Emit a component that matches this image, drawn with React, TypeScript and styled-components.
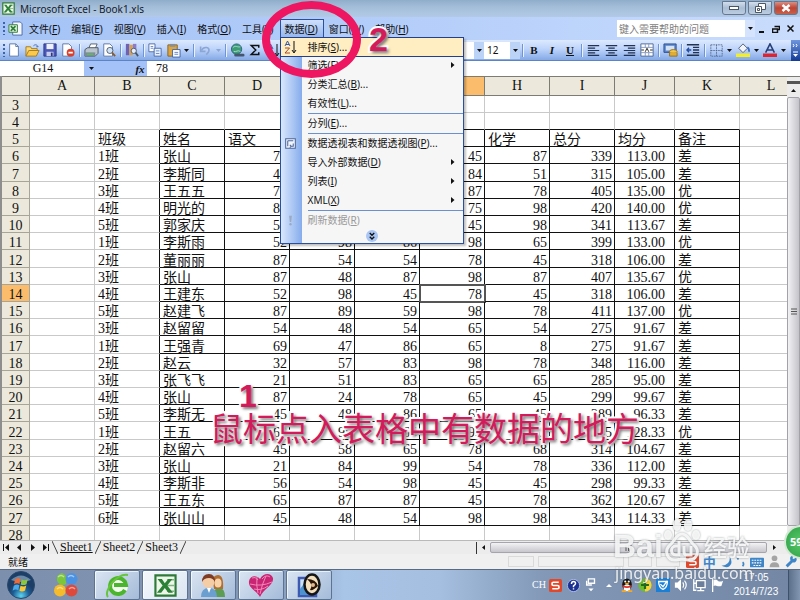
import React from "react";
import styled, { createGlobalStyle, css } from "styled-components";

const UI = '"Noto Sans", "Noto Sans CJK SC", sans-serif';
const CELL = '"Liberation Serif", "Noto Sans CJK SC", serif';

const GlobalStyle = createGlobalStyle`
  * { box-sizing: border-box; }
  body { margin: 0; background: #fff; }
  button, input, select { font: inherit; color: inherit; margin: 0; padding: 0; border: 0; background: none; border-radius: 0; outline: 0; }
  button { display: inline-flex; align-items: center; justify-content: center; flex: none; }
  svg { display: block; flex: none; }
`;

const Screen = styled.div`
  position: relative;
  display: flex;
  flex-direction: column;
  height: 100vh;
  overflow: hidden;
  font: 10px/14px ${UI};
  color: #111;
`;

/* ---------- title bar ---------- */
const TitleBar = styled.header`
  display: flex;
  align-items: center;
  gap: 5px;
  height: 17px;
  flex: none;
  padding-left: 2px;
  background: linear-gradient(#8fadca, #a3bdd8 40%, #b3cae6);
`;
const Title = styled.h1`
  flex: 1;
  margin: 0;
  font: 10px/16px ${UI};
  color: #16202c;
`;
const CaptionButtons = styled.div`
  display: flex;
  gap: 2px;
  align-self: flex-start;
  padding: 1px 2px 0 0;
`;
const CaptionButton = styled.button<{ $close?: boolean }>`
  width: 24px;
  height: 14px;
  border: 1px solid #65788f;
  border-radius: 0 0 3px 3px;
  background: ${(p) => (p.$close ? "linear-gradient(#d98f83, #bf4434 50%, #c8604c)" : "linear-gradient(#d3deeb, #a9bdd3 50%, #bccde0)")};
`;

/* ---------- menu bar ---------- */
const MenuBar = styled.nav`
  display: flex;
  align-items: center;
  height: 23px;
  flex: none;
  padding: 0 3px;
  background: linear-gradient(90deg, #a5c3f6, #b4cefa 50%, #c9dcfd);
`;
const Grip = styled.span`
  width: 2px;
  height: 13px;
  flex: none;
  background: repeating-linear-gradient(#3c62a8 0 2px, transparent 2px 4px);
`;
const MenuLogo = styled.span`
  padding: 0 1px 0 3px;
`;
const MenuSlot = styled.div`
  position: relative;
`;
const MenuButton = styled.button<{ $open?: boolean }>`
  height: 20px;
  padding: 0 5px 0 4px;
  border: 1px solid transparent;
  white-space: nowrap;
  ${(p) =>
    p.$open &&
    css`
      border-color: #2c4f9b;
      border-bottom: 0;
      background: linear-gradient(#cfe0fb, #8fb2ec);
    `}
`;
const HelpBox = styled.div`
  display: flex;
  margin-left: auto;
  height: 17px;
  background: #fff;
`;
const HelpInput = styled.input`
  width: 128px;
  padding-left: 2px;
  &::placeholder { color: #7d7d7d; opacity: 1; }
`;
const DropButton = styled.button<{ $pale?: boolean }>`
  width: ${(p) => (p.$pale ? 10 : 14)}px;
  height: 100%;
  background: ${(p) => (p.$pale ? "#d5e4fc" : "transparent")};
`;
const DocButton = styled.button`
  width: 14px;
  height: 16px;
`;

/* ---------- drop-down menu ---------- */
const Dropdown = styled.div`
  position: absolute;
  z-index: 5;
  top: 18px;
  left: 0;
  width: 184px;
  border: 1px solid #2c4f9b;
  background: linear-gradient(90deg, #d9e8fd 0, #86acec 21px, #f6f6f6 21px);
  box-shadow: 2px 2px 2px rgba(0, 0, 0, 0.25);
`;
const DropItem = styled.button<{ $active?: boolean; $off?: boolean }>`
  display: flex;
  width: 100%;
  height: ${(p) => (p.$active ? 18 : 19)}px;
  justify-content: flex-start;
  color: ${(p) => (p.$off ? "#9a9a9a" : "#111")};
  outline: ${(p) => (p.$active ? "1px solid #22408e" : "0")};
  background: ${(p) => (p.$active ? "#ffeec2" : "transparent")};
  white-space: nowrap;
`;
const DropIcon = styled.span`
  display: flex;
  justify-content: center;
  width: 20px;
  margin-right: 7px;
`;
const DropLabel = styled.span`
  flex: 1;
  text-align: left;
`;
const SubArrow = styled.span`
  width: 12px;
`;
const DropRule = styled.div`
  height: 1px;
  margin-left: 27px;
  background: #6c8fd0;
`;
const DropMore = styled.button`
  display: flex;
  width: 100%;
  height: 13px;
`;

/* ---------- tool bar ---------- */
const ToolBar = styled.div`
  display: flex;
  align-items: center;
  height: 21px;
  flex: none;
  padding-left: 3px;
  background: linear-gradient(#dce9fe, #bdd4fa 45%, #84a9e6);
  border-bottom: 1px solid #5c83c4;
`;
const ToolButton = styled.button`
  width: 18px;
  height: 20px;
`;
const ToolArrow = styled.button`
  width: 9px;
  height: 18px;
`;
const ToolRule = styled.span`
  width: 1px;
  height: 13px;
  margin: 0 2px;
  flex: none;
  background: #6f94d6;
  box-shadow: 1px 0 #eaf2ff;
`;
const Spacer = styled.span`
  flex: 1;
`;
const Combo = styled.div<{ $w: number }>`
  display: flex;
  width: ${(p) => p.$w}px;
  height: 17px;
  flex: none;
  align-items: center;
  background: #fff;
`;
const ComboSelect = styled.select`
  flex: 1;
  min-width: 0;
  height: 16px;
  padding-left: 3px;
  appearance: none;
`;
const ComboArrow = styled.span`
  display: flex;
  justify-content: center;
  align-items: center;
  width: 10px;
  height: 100%;
  background: #bcd3f8;
`;
const ToolEnd = styled.button`
  width: 9px;
  height: 21px;
  margin-left: 3px;
  background: linear-gradient(#6f96de, #123a94);
`;
const BoldGlyph = styled.span<{ $i?: boolean; $u?: boolean }>`
  font: ${(p) => (p.$i ? "italic" : "normal")} bold 11px/14px ${CELL};
  text-decoration: ${(p) => (p.$u ? "underline" : "none")};
`;

/* ---------- formula bar ---------- */
const FormulaBar = styled.div`
  display: flex;
  height: 15px;
  flex: none;
  margin-left: 2px;
  background: #a4c2f7;
  font: 12px/15px ${CELL};
`;
const NameInput = styled.input`
  width: 82px;
  background: #fff;
  text-align: center;
`;
const FxButton = styled.button`
  width: 14px;
  margin: 0 0 0 35px;
  font: italic bold 11px/14px ${CELL};
`;
const FormulaInput = styled.input`
  flex: 1;
  padding-left: 9px;
  background: #fff;
`;

/* ---------- sheet ---------- */
const SheetArea = styled.main`
  display: flex;
  flex: 1;
  min-height: 0;
  border-left: 2px solid #8e8e8e;
`;
const SheetView = styled.div`
  flex: 1;
  min-width: 0;
  overflow: hidden;
`;
const Sheet = styled.table`
  width: calc(100% + 16px);
  table-layout: fixed;
  border-spacing: 0;
  font: 14px/18px ${CELL};
`;
const Col = styled.col<{ $w?: number }>`
  width: ${(p) => (p.$w ? `${p.$w}px` : "auto")};
`;
const SheetRow = styled.tr`
  height: 17px;
  &:nth-child(5n) { height: 18px; }
`;
const ColHead = styled.th<{ $on?: boolean }>`
  height: 20px;
  padding: 0;
  border: solid #7c7b74;
  border-width: 1px 1px 1px 0;
  background: ${(p) => (p.$on ? "#fbbd6c" : "#ece9dc")};
  font-weight: 400;
`;
const RowHead = styled.th<{ $on?: boolean }>`
  padding: 4px 0 0;
  border: solid #a7a598;
  border-width: 0 1px 1px 0;
  background: ${(p) => (p.$on ? "#fbbd6c" : "#ece9dc")};
  font-weight: 400;
  line-height: 12px;
`;
const Cell = styled.td<{ $r?: boolean; $b?: boolean; $num?: boolean; $wide?: boolean; $sel?: boolean }>`
  position: relative;
  height: 16px;
  padding: 4px ${(p) => (p.$wide ? 9 : 2)}px 0 3px;
  border: solid #c9c9c9;
  border-width: 0 1px 1px 0;
  ${(p) => p.$r && "border-right-color: #111;"}
  ${(p) => p.$b && "border-bottom-color: #111;"}
  ${(p) => p.$sel && "outline: 2px solid #555; outline-offset: -1px;"}
  line-height: 12px;
  text-align: ${(p) => (p.$num ? "right" : "left")};
  white-space: nowrap;
`;
const VScroll = styled.div`
  display: flex;
  flex-direction: column;
  align-items: center;
  position: relative;
  width: 13px;
  flex: none;
  border-top: 1px solid #7c7b74;
  background: #ececec;
`;
const SplitHandle = styled.span`
  width: 13px;
  height: 3px;
  margin-top: 4px;
  background: #555;
`;
const VArrow = styled.button`
  width: 13px;
  height: 13px;
`;
const VThumb = styled.div`
  display: flex;
  align-items: center;
  justify-content: center;
  width: 13px;
  flex: 1;
  margin-bottom: 14px;
  border: 1px solid #a2a2a8;
  border-radius: 2px;
  background: linear-gradient(90deg, #f2f2f4, #c3c3ca);
`;

/* ---------- sheet tabs and status ---------- */
const TabStrip = styled.div`
  display: flex;
  align-items: center;
  height: 14px;
  flex: none;
  border-top: 1px solid #b9b9b9;
  background: #ececec;
  font: 12px/13px ${CELL};
`;
const NavButton = styled.button`
  width: 13px;
  height: 13px;
`;
const Tabs = styled.div`
  display: flex;
  flex: 1;
  align-items: center;
`;
const Tab = styled.button<{ $on?: boolean }>`
  padding: 0 2px;
  height: 13px;
  text-decoration: ${(p) => (p.$on ? "underline" : "none")};
`;
const HScroll = styled.div`
  display: flex;
  align-items: center;
  width: 41%;
  height: 13px;
  padding-right: 20px;
`;
const HSplit = styled.span`
  width: 5px;
  height: 12px;
  border-right: 1px solid #333;
`;
const HThumb = styled.div`
  display: flex;
  align-items: center;
  justify-content: center;
  flex: 1;
  height: 11px;
  border: 1px solid #a5a5ab;
  border-radius: 2px;
  background: linear-gradient(#f3f3f5, #c6c6cd);
`;
const StatusBar = styled.div`
  display: flex;
  align-items: center;
  gap: 4px;
  height: 15px;
  flex: none;
  padding-left: 8px;
  background: #f0f0f0;
`;
const Pane = styled.span<{ $w: number }>`
  width: ${(p) => p.$w}px;
  height: 11px;
  border: 1px solid #dadada;
`;
const ImeBar = styled.div`
  display: flex;
  align-items: center;
  justify-content: space-around;
  width: 116px;
  height: 15px;
  color: #3e86c8;
`;
const ImeMode = styled.button`
  font: bold 13px/14px ${UI};
`;

/* ---------- task bar ---------- */
const TaskBar = styled.footer`
  display: flex;
  align-items: stretch;
  height: 31px;
  flex: none;
  border-top: 1px solid #596b83;
  background: linear-gradient(90deg, #7c8fac 0, #8499b7 34%, #a8c4e6 43%, #a5bfe0 55%, #8298b6 68%, #7387a5);
`;
const StartButton = styled.button`
  width: 42px;
`;
const TaskButton = styled.button<{ $plain?: boolean; $on?: boolean }>`
  width: ${(p) => (p.$plain ? 47 : 46)}px;
  margin-right: ${(p) => (p.$plain ? 5 : 2)}px;
  ${(p) =>
    !p.$plain &&
    css`
      border: 1px solid #5d7392;
      border-radius: 2px;
      box-shadow: inset 1px 1px rgba(255, 255, 255, 0.7);
      background: ${p.$on ? "linear-gradient(135deg, #f5f8fc, #dbe6f2)" : "linear-gradient(135deg, #dbe5f2, #a4bbd9)"};
    `}
`;
const Tray = styled.div`
  display: flex;
  align-items: center;
  margin-left: auto;
  color: #fff;
`;
const TrayLang = styled.span`
  width: 14px;
  font: 10px/12px ${CELL};
`;
const TrayButton = styled.button`
  width: 18px;
  height: 20px;
`;
const Clock = styled.time`
  width: 62px;
  padding-right: 2px;
  font: 10px/14px "Liberation Sans", sans-serif;
  text-align: center;
`;
const ShowDesktop = styled.button`
  width: 12px;
  height: 30px;
  border-left: 1px solid #3f506a;
  background: linear-gradient(90deg, #5c6f8b, #8296b2);
`;

/* ---------- annotations floating over the window ---------- */
const Ring = styled.div`
  position: absolute;
  z-index: 8;
  top: 1px;
  left: 262px;
  width: 99px;
  height: 77px;
  border: 8px solid #ee1660;
  border-radius: 50%;
  pointer-events: none;
`;
const Mark = styled.div<{ $x: number; $y: number; $size: number; $bold?: boolean }>`
  position: absolute;
  z-index: 8;
  left: ${(p) => p.$x}px;
  top: ${(p) => p.$y}px;
  font: ${(p) => (p.$bold ? 700 : 400)} ${(p) => p.$size}px/40px ${(p) => (p.$bold ? '"Liberation Sans", sans-serif' : '"Noto Sans CJK SC", sans-serif')};
  color: #d31a5b;
  white-space: nowrap;
  -webkit-text-stroke: 4px #fff;
  paint-order: stroke fill;
  text-shadow: 2px 2px 3px rgba(0, 0, 0, 0.55);
  pointer-events: none;
`;
const Ball = styled.div`
  position: absolute;
  z-index: 8;
  right: -18px;
  top: 525px;
  width: 34px;
  height: 34px;
  padding-left: 4px;
  border: 2px solid #d5e8d5;
  border-radius: 50%;
  background: radial-gradient(#5bc96b, #2c9f45);
  color: #fff;
  font: bold 11px/30px ${UI};
`;
const Watermark = styled.div`
  position: absolute;
  z-index: 7;
  left: 613px;
  top: 515px;
  color: rgba(255, 255, 255, 0.85);
  filter: drop-shadow(0 0 1px rgba(110, 115, 120, 0.75));
  pointer-events: none;
`;
const MarkLine = styled.div`
  display: flex;
  align-items: flex-end;
  height: 48px;
  font: bold 32px/34px "Liberation Sans", sans-serif;
`;
const MarkCjk = styled.span`
  margin-left: 3px;
  font: 500 23px/34px "Noto Sans CJK SC", sans-serif;
`;
const MarkUrl = styled.div`
  padding-left: 2px;
  font: 16px/20px ${UI};
`;

/* ---------- icons ---------- */
const Down = ({ c = "#111" }: { c?: string }) => (
  <svg width="5" height="3"><path d="M0 0h5L2.500 3z" fill={c} /></svg>
);
const Right = () => (
  <svg width="4" height="6"><path d="M0 0l3.500 3L0 6z" fill="#111" /></svg>
);
const Svg = ({ s = 14, children }: { s?: number; children: React.ReactNode }) => (
  <svg width={s} height={s} viewBox="0 0 16 16" fill="none">{children}</svg>
);
const ExcelIcon = ({ s = 13 }: { s?: number }) => (
  <Svg s={s}>
    <path d="M1 1h14v14H1z" fill="#eef6ea" stroke="#2e7a38" strokeWidth="1.500" />
    <path d="M9 4h5M9 8h5M9 12h5" stroke="#7fb583" />
    <path d="M2.500 3.500h3l2 3 2.500-3h2.800L9.200 8l4 5H10L7.500 9.700 5 13H2l4-5z" fill="#2b8136" />
  </Svg>
);
const DocIcon = () => (
  <Svg s={15}>
    <path d="M5 1h8l2 2v12H5z" fill="#f5f8fd" stroke="#4b6aa5" />
    <path d="M1 4h9v8H1z" fill="#e6f3e2" stroke="#2e7a38" />
    <path d="M3 5.500l5 5M8 5.500l-5 5" stroke="#2b8136" strokeWidth="1.800" />
  </Svg>
);
const NewIcon = () => <Svg><path d="M3 1h7l3 3v11H3z" fill="#fff" stroke="#5671a3" /><path d="M10 1v3h3" stroke="#5671a3" /></Svg>;
const OpenIcon = () => (
  <Svg s={15}><path d="M1 14V4h5l1 2h6v2" fill="#f7d777" stroke="#a37a1e" /><path d="M1 14l3-6h11l-3 6z" fill="#fbc94b" stroke="#a37a1e" /><path d="M9 3c2-2 4-1 5 1l-2 0" stroke="#4668a8" /></Svg>
);
const SaveIcon = () => <Svg><path d="M1 1h14v14H1z" fill="#4c58b8" stroke="#2c3584" /><path d="M4 1h8v6H4z" fill="#eef1fb" /><path d="M4 10h8v5H4z" fill="#c7cdea" /><path d="M9 11h2v4H9z" fill="#2c3584" /></Svg>;
const PermIcon = () => <Svg><path d="M2 1h7l3 3v11H2z" fill="#fff" stroke="#5671a3" /><circle cx="11" cy="11" r="4.500" fill="#d8402d" /><path d="M8.500 11h5" stroke="#fff" strokeWidth="2" /></Svg>;
const PrintIcon = () => <Svg s={15}><path d="M5 6l2-5h7l-2 5z" fill="#fff" stroke="#58606c" /><path d="M1 7l3-2h11v6l-3 3H1z" fill="#b9c4cf" stroke="#4d5763" /><path d="M1 10h11v4H1z" fill="#7d8b99" /><path d="M3 12h7" stroke="#55c04f" strokeWidth="1.500" /></Svg>;
const PreviewIcon = () => <Svg><path d="M2 1h7l3 3v11H2z" fill="#fff" stroke="#5671a3" /><circle cx="9" cy="8.500" r="3.500" fill="#cfe2f6" stroke="#46566b" /><path d="M11.500 11l3.500 4" stroke="#8a5a2b" strokeWidth="2" /></Svg>;
const ResearchIcon = () => <Svg><path d="M1 1h4v13H1z" fill="#6e62b4" /><path d="M5 2h4v12H5z" fill="#d8a052" /><path d="M9 1h4v8H9z" fill="#8b7bc9" /><circle cx="10" cy="9" r="3" fill="#e6eefa" stroke="#46566b" /><path d="M12 11l3 4" stroke="#46566b" strokeWidth="2" /></Svg>;
const CopyIcon = () => <Svg><path d="M1 1h7v9H1z" fill="#fff" stroke="#4263a5" /><path d="M7 6h8v9H7z" fill="#e8f0fd" stroke="#4263a5" /><path d="M3 4h3M3 6h3M9 9h4M9 12h4" stroke="#5f82c4" /></Svg>;
const PasteIcon = () => <Svg s={15}><path d="M2 2h10v12H2z" fill="#d9a441" stroke="#8c6420" /><path d="M4 1h6v3H4z" fill="#888d96" /><path d="M7 7h8v8H7z" fill="#fff" stroke="#4263a5" /><path d="M9 10h4M9 12h4" stroke="#5f82c4" /></Svg>;
const UndoIcon = () => <Svg s={13}><path d="M2 3v6h6" stroke="#8ba5d4" strokeWidth="2" /><path d="M3 8c3-6 11-4 9 1-1 2-2 3-3 4" stroke="#8ba5d4" strokeWidth="2" /></Svg>;
const LinkIcon = () => <Svg s={15}><circle cx="7" cy="6.500" r="5.500" fill="#3f9d76" stroke="#2d5f86" /><path d="M3 5c3-3 5 0 8-1M4 9c3 1 4-2 7 0" stroke="#a8dccb" /><path d="M6 13h4M9 13h5" stroke="#45566e" strokeWidth="3" strokeLinecap="round" /></Svg>;
const SumIcon = () => <Svg s={12}><path d="M13 5V2H3l6 6-6 6h10v-3" stroke="#111" strokeWidth="2" /></Svg>;
const SortIcon = () => (
  <svg width="13" height="14" viewBox="0 0 13 14" fill="none">
    <path d="M1 6l2.500-5L6 6M2 4.500h3" stroke="#3457a8" /><path d="M1 8h4.500L1 13h5" stroke="#a34a2c" /><path d="M10 1v11M8 10l2 3 2-3" stroke="#111" />
  </svg>
);
const Align = ({ a }: { a: number }) => {
  const from = [1, 4, 6][a];
  const to = [10, 12, 15][a];
  return <Svg s={13}><path d={`M1 2h14M${from} 5H${to}M1 8h14M${from} 11H${to}M1 14h14`} stroke="#223252" strokeWidth="1.500" /></Svg>;
};
const MergeIcon = () => <Svg><path d="M1 1h14v14H1z" fill="#fff" stroke="#45608f" /><path d="M1 5h14M1 11h14M6 1v4M10 1v4M6 11v4M10 11v4" stroke="#7e94bb" /><path d="M6 10l2-4 2 4M1.500 8h3M11.500 8h3" stroke="#111" /></Svg>;
const MoneyIcon = () => <Svg s={15}><path d="M1 1h13v9H1z" fill="#5d86cd" stroke="#2f4f8f" /><path d="M3 3h9v5H3z" fill="#d4e2f8" /><ellipse cx="11" cy="9" rx="4" ry="2" fill="#f0c850" stroke="#96701c" /><path d="M7 10v4h8v-4" fill="#e0ae36" stroke="#96701c" /></Svg>;
const IndentIcon = () => <Svg><path d="M1 2h14M8 5h7M8 8h7M8 11h7M1 14h14" stroke="#223252" strokeWidth="1.500" /><path d="M6 8H1M3.500 5.500L1 8l2.500 2.500" stroke="#234b9f" strokeWidth="1.500" /></Svg>;
const BorderIcon = () => <Svg s={13}><path d="M1 1h14v14H1zM8 1v14M1 8h14" stroke="#4d6088" strokeDasharray="2 1" /></Svg>;
const FillIcon = () => <Svg><path d="M3 6l5-5 5 5-5 5z" fill="#f2f5fa" stroke="#44546e" /><path d="M13 5c2 1 2 3 2 5" stroke="#3e6cc0" strokeWidth="2" /><path d="M0 12h16v4H0z" fill="#f3ee2b" /></Svg>;
const FontIcon = () => <Svg><path d="M3 11L8 1l5 10M5 8h6" stroke="#283e78" strokeWidth="1.800" /><path d="M0 12h16v4H0z" fill="#dd2430" /></Svg>;
const PivotIcon = () => <Svg s={11}><path d="M1 1h14v14H1z" fill="#f1f5fc" stroke="#4b659a" strokeWidth="1.500" /><path d="M4 4h8M4 4v8M8 12h4V8M7 10l2 2-2 2" stroke="#4b659a" strokeWidth="1.500" /></Svg>;
const BangIcon = () => <Svg s={11}><path d="M6 1h4l-1 9H7z" fill="#9aa9c4" /><circle cx="8" cy="13.500" r="1.700" fill="#9aa9c4" /></Svg>;
const MoreIcon = () => <Svg s={12}><circle cx="8" cy="8" r="8" fill="#a9c6f4" /><path d="M5 4l3 3 3-3M5 9l3 3 3-3" stroke="#111" strokeWidth="1.800" /></Svg>;
const Nav = ({ d }: { d: string }) => <svg width="8" height="7" viewBox="0 0 8 7"><path d={d} fill="#111" /></svg>;
const SogouIcon = ({ s = 13 }: { s?: number }) => <Svg s={s}><rect width="16" height="16" rx="2" fill="#e0482c" /><path d="M12 4H5.500C3 4 3 8 5.500 8h5c2.500 0 2.500 4 0 4H4" stroke="#fff" strokeWidth="2" /></Svg>;

const StartIcon = () => (
  <svg width="28" height="28" viewBox="0 0 28 28">
    <defs><radialGradient id="orb" cx=".5" cy=".9"><stop offset="0" stopColor="#5fd4f0" /><stop offset=".6" stopColor="#1c5e97" /><stop offset="1" stopColor="#1d3e66" /></radialGradient></defs>
    <circle cx="14" cy="14" r="13.500" fill="url(#orb)" stroke="#28496d" />
    <path d="M4 9Q14 0 24 9Q14 13 4 9z" fill="#b8d4e8" opacity=".5" />
    <path d="M8 8.500q3-2 5.500-.5l-1 5q-3-1.500-5.500.5z" fill="#ee6a38" />
    <path d="M14.700 8.500q3 1.500 6-.3l-1.200 5q-3 1.600-5.800.3z" fill="#8cc63e" />
    <path d="M6.800 14.700q3-2 5.500-.5l-1 5q-3-1.500-5.700.6z" fill="#4aa9e8" />
    <path d="M13.500 14.800q3 1.500 5.800-.2l-1.200 5q-3 1.600-5.700.2z" fill="#fcc735" />
  </svg>
);
const BallsIcon = () => (
  <svg width="26" height="26" viewBox="0 0 26 26">
    <path d="M9 1a6 6 0 1 0 4 11V7A6 6 0 0 0 9 1z" fill="#7cc63c" /><circle cx="18.500" cy="7" r="6" fill="#4b93e2" />
    <circle cx="7" cy="18.500" r="6" fill="#f5bb2a" /><circle cx="18.500" cy="18.500" r="6" fill="#dd4a3c" />
    <path d="M5 5q3-3 6 0M15 5q3-3 6 0M4 17q3-3 6 0M16 17q3-3 6 0" stroke="#fff" strokeWidth="1.500" opacity=".5" fill="none" />
  </svg>
);
const BrowserIcon = () => (
  <svg width="25" height="25" viewBox="0 0 25 25" fill="none">
    <circle cx="13" cy="13" r="10" fill="#f4fbef" /><path d="M20 17a8 8 0 1 1 1-5H9" stroke="#4cb52e" strokeWidth="4" /><path d="M3 24C-2 18 12 0 23 2" stroke="#67c43d" strokeWidth="2" />
  </svg>
);
const PeopleIcon = () => (
  <svg width="26" height="25" viewBox="0 0 26 25">
    <path d="M13 24q0-9 6-9t6 9z" fill="#5c9c54" /><path d="M13 8q0-6 5-6 6 0 5 14h-9z" fill="#b06e30" /><ellipse cx="18" cy="10" rx="3.500" ry="4.500" fill="#f7d3ac" />
    <path d="M1 24q0-9 8-9t8 9z" fill="#6b9fd0" /><circle cx="8.500" cy="9" r="6" fill="#f4cda6" /><path d="M2 9q0-8 7-8 6 0 6 8-2-4-6-4-5 0-7 4z" fill="#7e3b24" /><path d="M7 15l2 5 2-5z" fill="#fff" />
  </svg>
);
const HeartIcon = () => (
  <svg width="26" height="25" viewBox="0 0 26 25"><path d="M12 24C8 17 0 15 1 8c1-6 8-6 11-2 3-6 11-7 13-1 1 7-9 10-13 19z" fill="#ca2574" /><path d="M4 5q3-2 6 2M14 6q4-5 8-2M2 11q11 3 22-2M6 16q7 2 14-3M9 4q-1 8 1 16M18 3q-4 8-6 18" stroke="#ef8ab8" fill="none" /></svg>
);
const LensIcon = () => (
  <svg width="26" height="25" viewBox="0 0 26 25" fill="none">
    <path d="M3 5h17v18H3z" fill="#c9e2f5" stroke="#3d59b4" strokeWidth="2.500" /><path d="M4 16l6-8 6 14H4z" fill="#4d93cd" />
    <ellipse cx="16" cy="11.500" rx="7.500" ry="10" fill="#f2dfbd" stroke="#151515" strokeWidth="2.500" /><path d="M11 6q9 0 11 7-5 5-8 4 4-5-3-11z" fill="#2c1408" /><circle cx="17" cy="12" r="2" fill="#e2b98c" />
  </svg>
);
const PawIcon = () => (
  <svg width="38" height="46" viewBox="0 0 38 46">
    <g fill="currentColor"><ellipse cx="5" cy="18" rx="4" ry="5" /><ellipse cx="14" cy="8" rx="4" ry="6" /><ellipse cx="25" cy="8" rx="4" ry="6" /><ellipse cx="33" cy="18" rx="4" ry="5" /></g>
    <path d="M19 17c-6 0-7 7-12 11-7 6-2 16 6 15 4-1 8-1 12 0 8 1 13-9 6-15-5-4-6-11-12-11z" fill="none" stroke="currentColor" strokeWidth="3" />
    <path d="M16 24v14h-3c-6 0-6-9 0-9h3M21 29v6q0 3 3 3h4v-9" fill="none" stroke="currentColor" strokeWidth="3" />
  </svg>
);

/* ---------- data ---------- */
const menus: [string, string][] = [["文件", "F"], ["编辑", "E"], ["视图", "V"], ["插入", "I"], ["格式", "O"], ["工具", "T"], ["数据", "D"], ["窗口", "W"], ["帮助", "H"]];

type Drop = { t: string; k: string; dots?: boolean; sub?: boolean; icon?: React.ReactNode; active?: boolean; off?: boolean; rule?: boolean };
const dropItems: Drop[] = [
  { t: "排序", k: "S", dots: true, icon: <SortIcon />, active: true },
  { t: "筛选", k: "F", sub: true },
  { t: "分类汇总", k: "B", dots: true },
  { t: "有效性", k: "L", dots: true, rule: true },
  { t: "分列", k: "E", dots: true, rule: true },
  { t: "数据透视表和数据透视图", k: "P", dots: true, icon: <PivotIcon /> },
  { t: "导入外部数据", k: "D", sub: true },
  { t: "列表", k: "I", sub: true },
  { t: "XML", k: "X", sub: true, rule: true },
  { t: "刷新数据", k: "R", off: true, icon: <BangIcon /> },
];

const letters = "ABCDEFGHIJKL".split("");
const widths = [28, 65, 65, 65, 65, 65, 65, 65, 65, 65, 60, 65];

const rows: string[][] = [
  [], [],
  ["班级", "姓名", "语文", "数学", "英语", "物理", "化学", "总分", "均分", "备注"],
  ["1班", "张山", "78", "54", "75", "45", "87", "339", "113.00", "差"],
  ["2班", "李斯同", "45", "57", "78", "84", "51", "315", "105.00", "差"],
  ["3班", "王五五", "78", "75", "87", "87", "78", "405", "135.00", "优"],
  ["4班", "明光的", "87", "75", "85", "75", "98", "420", "140.00", "优"],
  ["5班", "郭家庆", "54", "78", "66", "45", "98", "341", "113.67", "差"],
  ["1班", "李斯雨", "52", "98", "86", "98", "65", "399", "133.00", "优"],
  ["2班", "董丽丽", "87", "54", "54", "78", "45", "318", "106.00", "差"],
  ["3班", "张山", "87", "48", "87", "98", "87", "407", "135.67", "优"],
  ["4班", "王建东", "52", "98", "45", "78", "45", "318", "106.00", "差"],
  ["5班", "赵建飞", "87", "89", "59", "98", "78", "411", "137.00", "优"],
  ["3班", "赵留留", "54", "48", "54", "65", "54", "275", "91.67", "差"],
  ["1班", "王强青", "69", "47", "86", "65", "8", "275", "91.67", "差"],
  ["2班", "赵云", "32", "57", "83", "98", "78", "348", "116.00", "差"],
  ["3班", "张飞飞", "21", "51", "83", "65", "65", "285", "95.00", "差"],
  ["4班", "张山", "87", "24", "78", "65", "45", "299", "99.67", "差"],
  ["5班", "李斯无", "45", "48", "86", "65", "45", "289", "96.33", "差"],
  ["1班", "王五", "62", "98", "65", "98", "62", "385", "128.33", "优"],
  ["2班", "赵留六", "45", "58", "65", "78", "68", "314", "104.67", "差"],
  ["3班", "张山", "21", "84", "99", "54", "78", "336", "112.00", "差"],
  ["4班", "李斯非", "56", "54", "98", "45", "45", "298", "99.33", "差"],
  ["5班", "王五东", "65", "87", "87", "45", "78", "362", "120.67", "差"],
  ["6班", "张山山", "45", "48", "54", "98", "98", "343", "114.33", "差"],
  [],
];

const Tool = ({ label, children }: { label: string; children: React.ReactNode }) => (
  <ToolButton aria-label={label}>{children}</ToolButton>
);
const More = ({ label, c }: { label: string; c?: string }) => (
  <ToolArrow aria-label={label}><Down c={c} /></ToolArrow>
);

const DataMenu = () => (
  <Dropdown role="menu">
    {dropItems.map((i) => (
      <React.Fragment key={i.k}>
        <DropItem role="menuitem" $active={i.active} $off={i.off}>
          <DropIcon>{i.icon}</DropIcon>
          <DropLabel>{i.t}(<u>{i.k}</u>){i.dots ? "..." : ""}</DropLabel>
          <SubArrow>{i.sub && <Right />}</SubArrow>
        </DropItem>
        {i.rule && <DropRule />}
      </React.Fragment>
    ))}
    <DropMore aria-label="展开"><MoreIcon /></DropMore>
  </Dropdown>
);

const Grid = () => (
  <Sheet>
    <colgroup>
      {widths.map((w, i) => <Col key={i} $w={w} />)}
      <Col />
    </colgroup>
    <thead>
      <tr>
        <ColHead />
        {letters.map((l) => <ColHead key={l} $on={l === "G"}>{l}</ColHead>)}
      </tr>
    </thead>
    <tbody>
      {rows.map((r, ri) => {
        const n = ri + 3;
        const inData = n >= 5 && n <= 27;
        return (
          <SheetRow key={n}>
            <RowHead $on={n === 14}>{n}</RowHead>
            {letters.map((l, ci) => (
              <Cell
                key={l}
                $r={inData && ci >= 1 && ci <= 10}
                $b={n >= 4 && n <= 27 && ci >= 2 && ci <= 10}
                $num={n > 5 && ci >= 3 && ci <= 9}
                $wide={ci === 9 && n > 5}
                $sel={n === 14 && l === "G"}
              >
                {ci > 0 ? r[ci - 1] : null}
              </Cell>
            ))}
          </SheetRow>
        );
      })}
    </tbody>
  </Sheet>
);

export default function App() {
  return (
    <Screen>
      <GlobalStyle />
      <TitleBar>
        <ExcelIcon />
        <Title>Microsoft Excel - Book1.xls</Title>
        <CaptionButtons>
          <CaptionButton aria-label="最小化"><svg width="10" height="5"><rect x=".5" y=".5" width="9" height="3" fill="#fff" stroke="#4b5665" /></svg></CaptionButton>
          <CaptionButton aria-label="还原"><svg width="11" height="10" fill="#fff" stroke="#4b5665"><path d="M3.500.5h7v6h-7z" /><path d="M.5 3.500h6v6h-6z" /><path d="M2.500 5.500h2v2h-2z" /></svg></CaptionButton>
          <CaptionButton $close aria-label="关闭"><svg width="10" height="8"><path d="M1.500 1l7 6M8.500 1l-7 6" stroke="#fff" strokeWidth="2.500" /></svg></CaptionButton>
        </CaptionButtons>
      </TitleBar>

      <MenuBar>
        <Grip />
        <MenuLogo><DocIcon /></MenuLogo>
        {menus.map(([t, k]) => (
          <MenuSlot key={k}>
            <MenuButton $open={k === "D"}>{t}(<u>{k}</u>)</MenuButton>
            {k === "D" && <DataMenu />}
          </MenuSlot>
        ))}
        <HelpBox>
          <HelpInput aria-label="帮助" placeholder="键入需要帮助的问题" />
          <DropButton $pale aria-label="展开帮助"><Down /></DropButton>
        </HelpBox>
        <DocButton aria-label="最小化工作簿"><svg width="6" height="8"><path d="M0 6h5v2H0z" fill="#111" /></svg></DocButton>
        <DocButton aria-label="还原工作簿"><svg width="8" height="8" fill="none" stroke="#111"><path d="M2.500 1.500h5v3h-2M.5 4h5v3.500h-5z" strokeWidth="1.500" /></svg></DocButton>
        <DocButton aria-label="关闭工作簿"><svg width="7" height="7"><path d="M.5.5l6 6M6.500.5l-6 6" stroke="#111" strokeWidth="1.500" /></svg></DocButton>
      </MenuBar>

      <ToolBar>
        <Grip />
        <Tool label="新建"><NewIcon /></Tool>
        <Tool label="打开"><OpenIcon /></Tool>
        <Tool label="保存"><SaveIcon /></Tool>
        <Tool label="权限"><PermIcon /></Tool>
        <ToolRule />
        <Tool label="打印"><PrintIcon /></Tool>
        <Tool label="打印预览"><PreviewIcon /></Tool>
        <ToolRule />
        <Tool label="信息检索"><ResearchIcon /></Tool>
        <ToolRule />
        <Tool label="复制"><CopyIcon /></Tool>
        <Tool label="粘贴"><PasteIcon /></Tool>
        <More label="粘贴选项" />
        <ToolRule />
        <Tool label="撤消"><UndoIcon /></Tool>
        <More label="撤消列表" c="#8ba5d4" />
        <ToolRule />
        <Tool label="超链接"><LinkIcon /></Tool>
        <Tool label="自动求和"><SumIcon /></Tool>
        <Tool label="升序"><SortIcon /></Tool>
        <Spacer />
        <Combo $w={90}>
          <ComboSelect aria-label="字体"><option>宋体</option></ComboSelect>
          <ComboArrow><Down /></ComboArrow>
        </Combo>
        <Combo $w={36}>
          <ComboSelect aria-label="字号"><option>12</option></ComboSelect>
          <ComboArrow><Down /></ComboArrow>
        </Combo>
        <ToolRule />
        <Tool label="加粗"><BoldGlyph>B</BoldGlyph></Tool>
        <Tool label="倾斜"><BoldGlyph $i>I</BoldGlyph></Tool>
        <Tool label="下划线"><BoldGlyph $u>U</BoldGlyph></Tool>
        <ToolRule />
        <Tool label="左对齐"><Align a={0} /></Tool>
        <Tool label="居中"><Align a={1} /></Tool>
        <Tool label="右对齐"><Align a={2} /></Tool>
        <Tool label="合并及居中"><MergeIcon /></Tool>
        <ToolRule />
        <Tool label="货币样式"><MoneyIcon /></Tool>
        <ToolRule />
        <Tool label="减少缩进量"><IndentIcon /></Tool>
        <ToolRule />
        <Tool label="边框"><BorderIcon /></Tool>
        <More label="边框选项" />
        <Tool label="填充颜色"><FillIcon /></Tool>
        <More label="填充选项" />
        <Tool label="字体颜色"><FontIcon /></Tool>
        <More label="颜色选项" />
        <ToolEnd aria-label="工具栏选项"><svg width="7" height="14" fill="none" stroke="#fff"><path d="M1 1l1 1.500L1 4M4 1l1 1.500L4 4M1 9h5" /><path d="M1 11h5l-2.500 3z" fill="#fff" stroke="none" /></svg></ToolEnd>
      </ToolBar>

      <FormulaBar>
        <NameInput aria-label="名称框" defaultValue="G14" />
        <DropButton aria-label="名称列表"><Down /></DropButton>
        <FxButton aria-label="插入函数">fx</FxButton>
        <FormulaInput aria-label="编辑栏" defaultValue="78" />
      </FormulaBar>

      <SheetArea>
        <SheetView><Grid /></SheetView>
        <VScroll>
          <SplitHandle />
          <VArrow aria-label="向上"><svg width="5" height="3"><path d="M0 3h5L2.500 0z" fill="#111" /></svg></VArrow>
          <VThumb><svg width="6" height="7"><path d="M0 1h6M0 3.500h6M0 6h6" stroke="#555" /></svg></VThumb>
        </VScroll>
      </SheetArea>

      <TabStrip>
        <NavButton aria-label="第一张"><Nav d="M0 0h1v7H0zM6 0v7L2 3.500z" /></NavButton>
        <NavButton aria-label="上一张"><Nav d="M5 0v7L1 3.500z" /></NavButton>
        <NavButton aria-label="下一张"><Nav d="M2 0v7l4-3.500z" /></NavButton>
        <NavButton aria-label="最后一张"><Nav d="M1 0v7l4-3.500zM6 0h1v7H6z" /></NavButton>
        <Tabs>
          <svg width="6" height="13"><path d="M0 0l6 13" stroke="#444" /></svg>
          {["Sheet1", "Sheet2", "Sheet3"].map((t, i) => (
            <React.Fragment key={t}>
              <Tab $on={i === 0}>{t}</Tab>
              <svg width="6" height="13"><path d="M6 0L0 13" stroke="#444" /></svg>
            </React.Fragment>
          ))}
        </Tabs>
        <HScroll>
          <HSplit />
          <NavButton aria-label="向左"><Nav d="M5 1v5L2 3.500z" /></NavButton>
          <HThumb><svg width="7" height="6"><path d="M1 0v6M3.500 0v6M6 0v6" stroke="#555" /></svg></HThumb>
          <NavButton aria-label="向右"><Nav d="M3 1v5l3-2.500z" /></NavButton>
        </HScroll>
      </TabStrip>

      <StatusBar>
        <span>就绪</span>
        <Spacer />
        <Pane $w={26} /><Pane $w={86} /><Pane $w={24} /><Pane $w={24} />
        <ImeBar>
          <SogouIcon />
          <ImeMode>中</ImeMode>
          <Svg s={12}><path d="M13 1q1 11-11 12 10 5 13-3 1-5-2-9z" fill="#3e86c8" /></Svg>
          <Svg s={11}><path d="M3 2l2 3M11 9q3 2 0 6" stroke="#3e86c8" strokeWidth="2.500" /></Svg>
          <Svg s={14}><rect y="3" width="16" height="11" rx="1" fill="#3e86c8" /><path d="M2 6h12M2 9h12M4 12h8" stroke="#fff" strokeWidth="1.300" strokeDasharray="2 1" /></Svg>
          <Svg s={13}><circle cx="8" cy="4" r="3.500" fill="#a4a4a4" /><path d="M2 15q0-6 6-6t6 6z" fill="#a4a4a4" /></Svg>
          <Svg s={13}><path d="M2 14l7-7" stroke="#3e86c8" strokeWidth="3.500" /><path d="M14 2l-3 3-2-1 2-3C6 0 5 5 8 8s8 0 6-6z" fill="#3e86c8" /></Svg>
        </ImeBar>
      </StatusBar>

      <TaskBar>
        <StartButton aria-label="开始"><StartIcon /></StartButton>
        <TaskButton $plain aria-label="应用"><BallsIcon /></TaskButton>
        <TaskButton aria-label="浏览器"><BrowserIcon /></TaskButton>
        <TaskButton $on aria-label="Excel"><ExcelIcon s={23} /></TaskButton>
        <TaskButton aria-label="联系人"><PeopleIcon /></TaskButton>
        <TaskButton aria-label="音乐"><HeartIcon /></TaskButton>
        <TaskButton aria-label="看图"><LensIcon /></TaskButton>
        <Tray>
          <TrayLang>CH</TrayLang>
          <TrayButton aria-label="输入法"><SogouIcon /></TrayButton>
          <TrayButton aria-label="帮助"><Svg s={13}><circle cx="8" cy="8" r="7.500" fill="#1d3193" stroke="#b9c7ee" /><path d="M5.500 6q0-3 2.500-3t2.500 2.500Q10.500 7 8 8.500V10M8 11.500V13" stroke="#fff" strokeWidth="1.800" /></Svg></TrayButton>
          <TrayButton aria-label="语言栏"><Svg><path d="M5 1h7v5H5zM3 3v5h6" stroke="#fff" strokeWidth="1.500" /><path d="M5 12h6l-3 3z" fill="#fff" /></Svg></TrayButton>
          <TrayButton aria-label="隐藏的图标"><svg width="6" height="3"><path d="M0 3h6L3 0z" fill="#fff" /></svg></TrayButton>
          <TrayButton aria-label="QQ"><Svg><ellipse cx="8" cy="7.500" rx="5.500" ry="7" fill="#151515" /><ellipse cx="8" cy="11" rx="3.800" ry="4" fill="#fff" /><path d="M3 8q5 3 10 0v2q-5 3-10 0z" fill="#e12f24" /><path d="M5 5.500h6L8 8z" fill="#f8a81e" /><circle cx="6" cy="4" r="1.200" fill="#fff" /><circle cx="10" cy="4" r="1.200" fill="#fff" /><path d="M2 15h5M9 15h5" stroke="#f8a81e" strokeWidth="2" /></Svg></TrayButton>
          <TrayButton aria-label="安全卫士"><Svg><circle cx="8" cy="8" r="7.500" fill="#6dbd2d" /><path d="M8 .5a7.500 7.500 0 0 1 0 15z" fill="#f3d43a" /><path d="M8 3.500v9M3.500 8h9" stroke="#1f6b1e" strokeWidth="2.500" /></Svg></TrayButton>
          <TrayButton aria-label="盾牌"><Svg><path d="M0 0h16v16H0z" fill="#1c7fd6" /><path d="M3 4h10q0 7-5 9-5-2-5-9zM5 7l3 3 5-7" stroke="#fff" strokeWidth="1.500" /></Svg></TrayButton>
          <TrayButton aria-label="音量"><Svg><path d="M1 5h3l4-4v14l-4-4H1z" fill="#fff" /><path d="M10 5q2 3 0 6M12 3q4 5 0 10" stroke="#fff" strokeWidth="1.300" /></Svg></TrayButton>
          <TrayButton aria-label="网络"><Svg><path d="M5 3h10v8H5z" fill="#6b7f9c" stroke="#fff" strokeWidth="1.500" /><path d="M10 11v3M6 14.500h8M2 1v5h3M2 6v8h3" stroke="#fff" strokeWidth="1.500" /></Svg></TrayButton>
          <TrayButton aria-label="操作中心"><Svg><path d="M3 1v15" stroke="#fff" strokeWidth="1.500" /><path d="M4 2q3-1 5 1t6 0l-2 6q-3 1-5 0t-4 0z" fill="#fff" /></Svg></TrayButton>
          <Clock>17:05<br />2014/7/23</Clock>
          <ShowDesktop aria-label="显示桌面" />
        </Tray>
      </TaskBar>

      <Ring />
      <Mark $x={369} $y={19} $size={34} $bold>2</Mark>
      <Mark $x={239} $y={376} $size={32} $bold>1</Mark>
      <Mark $x={210} $y={407} $size={33}>鼠标点入表格中有数据的地方</Mark>
      <Watermark>
        <MarkLine>Bai<PawIcon /><MarkCjk>经验</MarkCjk></MarkLine>
        <MarkUrl>jingyan.baidu.com</MarkUrl>
      </Watermark>
      <Ball>59</Ball>
    </Screen>
  );
}
